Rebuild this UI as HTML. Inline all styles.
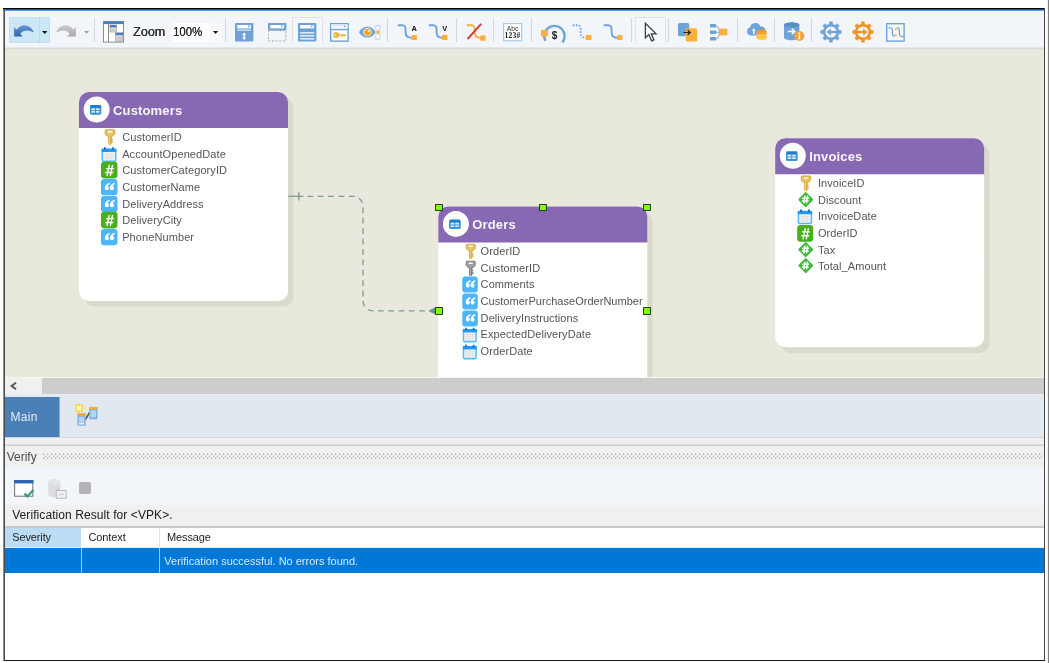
<!DOCTYPE html>
<html><head><meta charset="utf-8">
<style>
*{margin:0;padding:0;box-sizing:border-box}
html,body{width:1049px;height:663px;overflow:hidden;background:#fff}
body{position:relative;font-family:"Liberation Sans",sans-serif;font-size:11px;color:#4d4d4d}
.a{position:absolute}
svg{position:absolute;overflow:visible}
#in{position:absolute;left:5px;top:9px;width:1039px;height:651px;overflow:hidden;background:#fff}
#pg{position:absolute;left:-5px;top:-9px;width:1049px;height:663px}
#canvas{left:5px;top:49px;width:1039px;height:328px;background:#e8e8dc;overflow:hidden}
#cv{position:absolute;left:-5px;top:-49px;width:1049px;height:663px}
.sep{position:absolute;top:18px;width:1px;height:24px;background:#d3d8de}
.ent{position:absolute;background:#fff;border-radius:10px;box-shadow:5.4px 5.6px 0 0 #d9d9cc}
.ent .hd{position:absolute;left:0;top:0;right:0;height:36px;background:#8768b3;border-radius:10px 10px 0 0}
.ent .circ{position:absolute;left:5px;top:4px;width:26px;height:26px;border-radius:50%;background:#fff}
.ent .ttl{position:absolute;left:34px;top:10.7px;font-weight:bold;font-size:13px;color:#f8f5fc;line-height:16px;white-space:nowrap;letter-spacing:0.15px}
.row{position:absolute;left:0;width:100%;height:16px;line-height:16px;white-space:nowrap;font-size:11px;color:#555;letter-spacing:0.09px}
.row .t{position:absolute;left:43.2px;top:0}
.row svg{left:21.6px;top:0;width:16.5px;height:16.5px}
.hdl{position:absolute;width:7.7px;height:7.6px;background:#7fff00;border:1.1px solid #2c3620;border-radius:0.8px}
</style></head><body>
<!-- outer frame -->
<div class="a" style="left:1048px;top:0;width:1px;height:663px;background:#7e7e7e"></div><div class="a" style="left:1047px;top:0;width:1px;height:663px;background:#f1f1f1"></div>
<div id="all" style="position:absolute;left:0;top:0;width:1047px;height:663px;filter:blur(0.5px)">
<div class="a" style="left:3px;top:8px;width:1px;height:653px;background:#8e8e8e"></div><div class="a" style="left:4px;top:8px;width:1px;height:653px;background:#4c4c4c"></div>
<div class="a" style="left:3px;top:8px;width:1042px;height:1px;background:#000"></div>
<div class="a" style="left:1044px;top:8px;width:1px;height:653px;background:#4a4a4a"></div>
<div class="a" style="left:4px;top:660px;width:1041px;height:1px;background:#1c1c1c"></div>
<div id="in"><div id="pg">
<!-- top blue -->
<div class="a" style="left:5px;top:9px;width:1039px;height:1px;background:#0b58ae"></div>
<div class="a" style="left:5px;top:10px;width:1039px;height:1px;background:#5a9fe0"></div>
<div class="a" style="left:5px;top:11px;width:1039px;height:1px;background:#f5f8fc"></div>
<!-- toolbar -->
<div class="a" id="tb" style="left:5px;top:12px;width:1039px;height:37px;background:#f2f6fa"></div>
<div class="a" style="left:5px;top:47px;width:1039px;height:1px;background:#e6e9ec"></div><div class="a" style="left:5px;top:48px;width:1039px;height:1px;background:#d7dadb"></div>
<div class="a" style="left:9px;top:17px;width:41px;height:26px;background:#cce8f7;border:1px solid #c3dff0"></div>
<div class="a" style="left:39px;top:17px;width:1px;height:26px;background:#bcd9ec"></div>
<svg style="left:13px;top:22px;width:22px;height:16px" viewBox="0 0 22 16" ><defs><linearGradient id="ug" x1="0" y1="0" x2="0" y2="1"><stop offset="0" stop-color="#6b9bd6"/><stop offset="1" stop-color="#2e62ad"/></linearGradient></defs>
<path d="M1 5 L1.2 14.4 L9.8 14.4 L7.2 11.8 C10 8 15.2 7.2 20.8 10.6 C18.6 3.2 9.6 -0.2 3.5 7.6 Z" fill="url(#ug)"/></svg>
<svg style="left:42px;top:31px;width:6px;height:3px" viewBox="0 0 6 3" ><path d="M0 0h5.4l-2.7 3z" fill="#111"/></svg>
<svg style="left:55.2px;top:22px;width:22px;height:16px" viewBox="0 0 22 16" ><defs><linearGradient id="rg" x1="0" y1="0" x2="0" y2="1"><stop offset="0" stop-color="#c9cbcd"/><stop offset="1" stop-color="#a9abad"/></linearGradient></defs>
<path d="M21 5 L20.8 14.4 L12.2 14.4 L14.8 11.8 C12 8 6.8 7.2 1.2 10.6 C3.4 3.2 12.4 -0.2 18.5 7.6 Z" fill="url(#rg)"/></svg>
<svg style="left:83.5px;top:31px;width:6px;height:3px" viewBox="0 0 6 3" ><path d="M0 0h5l-2.5 2.8z" fill="#9a9a9a"/></svg>
<div class="sep" style="left:94px"></div>
<svg style="left:103px;top:21px;width:22px;height:22px" viewBox="0 0 22 22" ><rect x="0.5" y="0.5" width="20" height="20.6" fill="#fff" stroke="#8a8a8a"/>
<rect x="0.5" y="0.5" width="20" height="2.6" fill="#4a7ec2"/>
<path d="M5.5 3v18" stroke="#8a8a8a"/>
<rect x="7" y="4" width="6.5" height="7" fill="#e8e8e8" stroke="#9a9a9a" stroke-width=".6"/><rect x="7" y="4" width="6.5" height="2.4" fill="#4a7ec2"/>
<path d="M7.6 8h5.2M7.6 9.6h5.2" stroke="#aaa" stroke-width=".7"/>
<rect x="12.6" y="11.8" width="7.4" height="8.6" fill="#e4e4e4" stroke="#9a9a9a" stroke-width=".6"/><rect x="12.6" y="11.8" width="7.4" height="2.4" fill="#4a7ec2"/>
<path d="M13.4 16h6M13.4 17.6h6M13.4 19.2h6" stroke="#aaa" stroke-width=".7"/></svg>
<div class="a" style="left:133.2px;top:24.2px;font-size:13px;line-height:16px;color:#303030;white-space:nowrap;transform-origin:0 50%;transform:scaleX(0.965);text-shadow:0.35px 0 0 #303030">Zoom</div>
<div class="a" style="left:172px;top:23px;width:37.5px;height:18.6px;background:#fff"></div>
<div class="a" style="left:209.5px;top:23px;width:12px;height:18.6px;background:#f7f9fb"></div>
<div class="a" style="left:173.2px;top:24.2px;font-size:13px;line-height:16px;color:#262626;white-space:nowrap;transform-origin:0 50%;transform:scaleX(0.875);text-shadow:0.25px 0 0 #262626">100%</div>
<svg style="left:212.6px;top:31px;width:6px;height:3px" viewBox="0 0 6 3" ><path d="M0 0h5.2l-2.6 2.9z" fill="#111"/></svg>
<div class="sep" style="left:225px"></div>
<svg style="left:235.4px;top:22.7px;width:18.4px;height:18.4px" viewBox="0 0 18.4 18.4" ><rect x="0" y="0" width="18.4" height="18.4" rx="0.8" fill="#6fa3d8"/><rect x="2.2" y="2" width="13.8" height="3.4" fill="#fff"/><path d="M12.6 2.6h2.6l-1.3 2.2z" fill="#6fa3d8"/>
<rect x="2.2" y="6.4" width="13.8" height="1.3" fill="#dbe8f6"/>
<path d="M9.2 9.4l2.2 2.5h-1.5v2.6h1.5l-2.2 2.5l-2.2-2.5h1.5v-2.6h-1.5z" fill="#fff"/></svg>
<svg style="left:267.5px;top:22.7px;width:18.4px;height:18.4px" viewBox="0 0 18.4 18.4" ><rect x="0" y="0" width="18.4" height="7.4" rx="0.8" fill="#6fa3d8"/><rect x="2.2" y="2" width="13.8" height="3.4" fill="#fff"/><path d="M12.6 2.6h2.6l-1.3 2.2z" fill="#6fa3d8"/><rect x="0.5" y="7.6" width="17.4" height="10.3" fill="none" stroke="#a9a9a9" stroke-width="1" stroke-dasharray="2 1.6"/></svg>
<div class="a" style="left:291.5px;top:17px;width:31px;height:26px;background:#f4f7fb;border:1px solid #dde1e6;border-bottom:none"></div>
<svg style="left:297.8px;top:22.7px;width:18.4px;height:18.4px" viewBox="0 0 18.4 18.4" ><rect x="0" y="0" width="18.4" height="18.4" rx="0.8" fill="#6fa3d8"/><rect x="2.2" y="2" width="13.8" height="3.4" fill="#fff"/><path d="M12.6 2.6h2.6l-1.3 2.2z" fill="#6fa3d8"/>
<path d="M2.2 9.8h14M2.2 12.8h14M2.2 15.8h14" stroke="#fff" stroke-width="1.3"/></svg>
<svg style="left:329.6px;top:22.7px;width:19px;height:19px" viewBox="0 0 19 19" ><rect x="0.7" y="0.7" width="17.4" height="17.4" fill="#fff" stroke="#6fa3d8" stroke-width="1.4"/>
<rect x="1.4" y="1.4" width="16" height="4.6" fill="#f3f7fc"/><path d="M2.6 2.2h12.6" stroke="#cfe0f2" stroke-width="1"/><path d="M14 2.2h1.3v2.4h-1.3z" fill="#8fb7e2"/>
<path d="M0.7 6.6h17.4" stroke="#6fa3d8" stroke-width="1.4"/>
<circle cx="6.2" cy="12" r="3.1" fill="#e9b949"/><circle cx="5.2" cy="12" r="0.9" fill="#fbe6a6"/>
<path d="M8.6 11.2h7.6v1.6h-1.2v1h-1.4v-1h-1v1h-1.4v-1h-2.6z" fill="#e9b949"/></svg>
<svg style="left:358.8px;top:24.5px;width:22px;height:15px" viewBox="0 0 22 15" ><path d="M0 7.2C3.8 0 12.8 0 16.6 7.2C12.8 14.4 3.8 14.4 0 7.2Z" fill="#6fa3d8"/>
<ellipse cx="8.4" cy="7.2" rx="4.2" ry="4.1" fill="#fff"/><circle cx="8.5" cy="7.2" r="3.4" fill="#f9a62b"/><circle cx="9.9" cy="5.9" r="1" fill="#fff"/>
<rect x="16.9" y="0.6" width="4" height="13.6" fill="#eaf1f9" stroke="#b9d2ec" stroke-width=".8"/>
<rect x="17.7" y="1.6" width="2.4" height="2.6" fill="#fff"/><rect x="17.5" y="5.6" width="2.8" height="3.2" fill="#fbb03b"/><rect x="17.7" y="10.4" width="2.4" height="2.6" fill="#fff"/></svg>
<div class="sep" style="left:387px"></div>
<svg style="left:396.5px;top:23px;width:21px;height:18px" viewBox="0 0 21 18" ><path d="M0.8 2.2H5.5C9 2.2 8.6 6 8.6 8.5C8.6 11.5 9 14.6 13 14.6H15" fill="none" stroke="#6fa3d8" stroke-width="1.9" /><rect x="14.5" y="12" width="5.4" height="5" fill="#fbb03b"/><text x="17.2" y="8.4" font-size="7.5" font-weight="bold" text-anchor="middle" fill="#111" font-family="Liberation Sans">A</text></svg>
<svg style="left:428.4px;top:23px;width:21px;height:18px" viewBox="0 0 21 18" ><path d="M0.8 2.2H5.5C9 2.2 8.6 6 8.6 8.5C8.6 11.5 9 14.6 13 14.6H15" fill="none" stroke="#6fa3d8" stroke-width="1.9" /><rect x="14" y="12" width="5.4" height="5" fill="#fbb03b"/><text x="16.8" y="8.4" font-size="7.5" font-weight="bold" text-anchor="middle" fill="#111" font-family="Liberation Sans">V</text></svg>
<div class="sep" style="left:456px"></div>
<svg style="left:465.5px;top:23px;width:21px;height:18px" viewBox="0 0 21 18" ><path d="M0.8 2.2H5.5C9 2.2 8.6 6 8.6 8.5C8.6 11.5 9 14.6 13 14.6H15" fill="none" stroke="#fbb03b" stroke-width="1.9" /><rect x="14.2" y="12.5" width="5.4" height="5.2" fill="#fbb03b"/><path d="M15.2 0.8L1.6 16" stroke="#d13b3b" stroke-width="1.9"/></svg>
<div class="sep" style="left:493px"></div>
<svg style="left:503.2px;top:22.6px;width:19.2px;height:18.4px" viewBox="0 0 19.2 18.4" ><rect x="0.6" y="0.6" width="18" height="17.2" fill="#fff" stroke="#a9c9ea" stroke-width="1.2"/>
<text x="9.6" y="8.2" font-size="6.6" text-anchor="middle" fill="#333" font-family="Liberation Sans" letter-spacing="0.2">Abc</text>
<text x="9.6" y="15.4" font-size="7.6" font-weight="bold" text-anchor="middle" fill="#222" font-family="Liberation Serif" letter-spacing="0.2">123#</text></svg>
<div class="sep" style="left:531px"></div>
<svg style="left:540px;top:23px;width:27px;height:19.4px" viewBox="0 0 27 19.4" ><path d="M5.4 17.8A10.2 10.2 0 1 1 22.4 19.4" fill="none" stroke="#6fa3d8" stroke-width="2.4"/>
<rect x="1" y="7" width="6.8" height="6.4" fill="#fbb03b"/>
<text x="14.6" y="16.2" font-size="10" font-weight="bold" text-anchor="middle" fill="#1a1a1a" font-family="Liberation Sans">$</text></svg>
<svg style="left:571.8px;top:23px;width:21px;height:18px" viewBox="0 0 21 18" ><path d="M0.8 2.2H5.5C9 2.2 8.6 6 8.6 8.5C8.6 11.5 9 14.6 13 14.6H15" fill="none" stroke="#6fa3d8" stroke-width="1.9" stroke-dasharray="1.6 1.5"/><rect x="14" y="12" width="5.4" height="5" fill="#fbb03b"/></svg>
<svg style="left:603px;top:23px;width:21px;height:18px" viewBox="0 0 21 18" ><path d="M0.8 2.2H5.5C9 2.2 8.6 6 8.6 8.5C8.6 11.5 9 14.6 13 14.6H15" fill="none" stroke="#6fa3d8" stroke-width="1.9" /><rect x="14" y="12" width="5.4" height="5" fill="#fbb03b"/></svg>
<div class="sep" style="left:630.5px"></div>
<div class="a" style="left:635px;top:17px;width:31px;height:26px;background:#f4f7fb;border:1px solid #dde1e6;border-bottom:none"></div>
<svg style="left:644px;top:22px;width:14px;height:20px" viewBox="0 0 14 20" ><path d="M1.4 1.2V15.8L4.9 12.6L7.6 18.8L9.9 17.8L7.3 11.8H12Z" fill="#fff" stroke="#3c3c3c" stroke-width="1.3" stroke-linejoin="miter"/></svg>
<div class="sep" style="left:668px"></div>
<svg style="left:678px;top:22.8px;width:20px;height:19px" viewBox="0 0 20 19" ><rect x="0" y="0" width="11.2" height="13.2" rx="1.6" fill="#6fa3d8"/><rect x="7.8" y="5.2" width="11.4" height="13.4" rx="1.6" fill="#fbb03b"/>
<path d="M5.4 9.5h6.6M9.6 7l2.6 2.5l-2.6 2.5" fill="none" stroke="#222" stroke-width="1.2"/></svg>
<svg style="left:710px;top:23.5px;width:18px;height:17px" viewBox="0 0 18 17" ><path d="M6 1.8C9 1.8 9 8.2 11 8.2M6 8.2H11M6 14.8C9 14.8 9 8.2 11 8.2" fill="none" stroke="#8a8a8a" stroke-width="0.9"/>
<rect x="0" y="0" width="6" height="3.6" rx=".5" fill="#6fa3d8"/><rect x="0" y="6.4" width="6" height="3.6" rx=".5" fill="#6fa3d8"/><rect x="0" y="13" width="6" height="3.6" rx=".5" fill="#6fa3d8"/>
<rect x="10" y="4.6" width="7.4" height="6.8" fill="#fbb03b"/></svg>
<div class="sep" style="left:736.5px"></div>
<svg style="left:745.5px;top:22.4px;width:21px;height:19px" viewBox="0 0 21 19" ><defs><linearGradient id="og" x1="0" y1="0" x2="0" y2="1"><stop offset="0" stop-color="#f7931e"/><stop offset="0.55" stop-color="#fbb03b"/><stop offset="1" stop-color="#fde047"/></linearGradient></defs>
<path d="M4.4 13.4A4 4 0 0 1 4 5.6A5.4 5.4 0 0 1 14.4 4.6A4.4 4.4 0 0 1 16 13.4Z" fill="#6fa3d8"/>
<path d="M7.8 6.2l2 2.4h-1.3v3.6h-1.4v-3.6h-1.3z" fill="#fff"/>
<path d="M10.6 9.6c0-2.4 10-2.4 10 0v6.6c0 2.6-10 2.6-10 0z" fill="url(#og)"/>
<path d="M10.6 12.4c1 1.8 9 1.8 10 0" fill="none" stroke="#fff6d8" stroke-width=".7" opacity=".8"/></svg>
<div class="sep" style="left:774px"></div>
<svg style="left:783.6px;top:22.4px;width:22px;height:19.4px" viewBox="0 0 22 19.4" ><path d="M0 3C0 -0.6 15.4 -0.6 15.4 3V15.6C15.4 19.2 0 19.2 0 15.6Z" fill="#6fa3d8"/>
<ellipse cx="7.7" cy="3" rx="7.7" ry="2.6" fill="#5a8dc4"/>
<path d="M3.8 9.4h6.4M7.8 6.6l3 2.8l-3 2.8" fill="none" stroke="#fff" stroke-width="1.5"/>
<circle cx="15.3" cy="14" r="5" fill="#f7a233"/><rect x="14.5" y="10.6" width="1.7" height="1.7" fill="#fff"/><rect x="14.5" y="13.1" width="1.7" height="4.2" fill="#fff"/></svg>
<div class="sep" style="left:811px"></div>
<svg style="left:820px;top:21px;width:22px;height:22px" viewBox="0 0 22 22" ><path d="M9.33 3.18 L9.56 0.80 L12.44 0.80 L12.67 3.18 L15.35 4.29 L17.20 2.77 L19.23 4.80 L17.71 6.65 L18.82 9.33 L21.20 9.56 L21.20 12.44 L18.82 12.67 L17.71 15.35 L19.23 17.20 L17.20 19.23 L15.35 17.71 L12.67 18.82 L12.44 21.20 L9.56 21.20 L9.33 18.82 L6.65 17.71 L4.80 19.23 L2.77 17.20 L4.29 15.35 L3.18 12.67 L0.80 12.44 L0.80 9.56 L3.18 9.33 L4.29 6.65 L2.77 4.80 L4.80 2.77 L6.65 4.29Z" fill="#6fa3d8" stroke="#6fa3d8" stroke-width="0.5" stroke-linejoin="round"/><circle cx="11" cy="11" r="5.6" fill="#f2f6fa"/><path d="M19 11H10" stroke="#6fa3d8" stroke-width="2.2"/><path d="M6.6 11l4.2 -3.6v7.2z" fill="#6fa3d8"/></svg>
<svg style="left:852.4px;top:21px;width:22px;height:22px" viewBox="0 0 22 22" ><path d="M9.33 3.18 L9.56 0.80 L12.44 0.80 L12.67 3.18 L15.35 4.29 L17.20 2.77 L19.23 4.80 L17.71 6.65 L18.82 9.33 L21.20 9.56 L21.20 12.44 L18.82 12.67 L17.71 15.35 L19.23 17.20 L17.20 19.23 L15.35 17.71 L12.67 18.82 L12.44 21.20 L9.56 21.20 L9.33 18.82 L6.65 17.71 L4.80 19.23 L2.77 17.20 L4.29 15.35 L3.18 12.67 L0.80 12.44 L0.80 9.56 L3.18 9.33 L4.29 6.65 L2.77 4.80 L4.80 2.77 L6.65 4.29Z" fill="#f7931e" stroke="#f7931e" stroke-width="0.5" stroke-linejoin="round"/><circle cx="11" cy="11" r="5.6" fill="#f2f6fa"/><path d="M3 11H12" stroke="#f7931e" stroke-width="2.2"/><path d="M15.4 11l-4.2 -3.6v7.2z" fill="#f7931e"/></svg>
<svg style="left:886.2px;top:22.8px;width:19px;height:19px" viewBox="0 0 19 19" ><rect x="0.7" y="0.7" width="17.4" height="17.4" fill="#f6f9fc" stroke="#6fa3d8" stroke-width="1.4"/>
<path d="M2.6 4.9H4.4C6.6 4.9 6.4 7.2 6.4 9S6.2 13.3 8.6 13.3" fill="none" stroke="#6fa3d8" stroke-width="1.3"/>
<path d="M10.6 4.9H11.4C13.6 4.9 13.4 7.2 13.4 9S13.2 13.5 15.6 13.5H17.4" fill="none" stroke="#6fa3d8" stroke-width="1.3"/>
<rect x="8.7" y="5.3" width="1.9" height="1.9" fill="#fbb03b"/><rect x="8.7" y="11.2" width="1.9" height="1.9" fill="#fbb03b"/></svg>
<!-- canvas -->
<div class="a" id="canvas"><div id="cv">
<div class="ent" style="left:79px;top:92px;width:209px;height:209px;"><div class="hd"></div><svg style="left:0;top:0;width:36px;height:36px" viewBox="0 0 36 36"><circle cx="17.6" cy="17.5" r="13" fill="#fff"/></svg><svg style="left:11.2px;top:12.9px;width:11px;height:9px" viewBox="0 0 11 9"><rect x="0" y="0" width="11.2" height="9.4" rx="1.3" fill="#227fc3"/><path d="M0 2.8H11.2V8.1a1.3 1.3 0 0 1-1.3 1.3H1.3a1.3 1.3 0 0 1-1.3-1.3z" fill="#3b93d6"/>
<rect x="1.4" y="3.4" width="3.6" height="1.7" fill="#dcecf8"/><rect x="6" y="3.4" width="3.6" height="1.7" fill="#dcecf8"/>
<rect x="1.4" y="6" width="3.6" height="1.7" fill="#dcecf8"/><rect x="6" y="6" width="3.6" height="1.7" fill="#dcecf8"/></svg><div class="ttl">Customers</div><div class="row" style="top:37.30px"><svg style="left:22.2px;width:16.5px" viewBox="0 0 16.5 16.5" preserveAspectRatio="none"><path d="M5.2 0.3H12.8a1.5 1.5 0 0 1 1.5 1.5V5L10.75 8.2V9.6h1.1v1.3h-1.1v1h1.3v1.4h-1.3v1.4L9 16.2L7.2 14.7V8.2L3.7 5V1.8a1.5 1.5 0 0 1 1.5-1.5z" fill="#d5aa45"/>
<path d="M5.5 1.2H12.5a.8 .8 0 0 1 .8 .8V4.6L10.2 7.4H7.8L4.7 4.6V2a.8 .8 0 0 1 .8-.8z" fill="#f3d67e" opacity=".6"/>
<path d="M8.1 7.6v7.4l.9.8v-8.2z" fill="#f6e19a" opacity=".85"/>
<rect x="6.8" y="2.1" width="4.4" height="1.4" rx=".7" fill="#fff"/></svg><span class="t" style="left:43.2px">CustomerID</span></div><div class="row" style="top:53.85px"><svg style="left:22.2px;width:16.5px" viewBox="0 0 16.5 16.5" preserveAspectRatio="none"><rect x="1.3" y="3.3" width="13.4" height="11.9" rx="1" fill="#f4f4f4" stroke="#54b9fc" stroke-width="1.6"/>
<rect x="0.5" y="2.7" width="15" height="3.3" rx=".8" fill="#2299f2"/>
<rect x="3" y="1.3" width="1.9" height="2.6" fill="#1272c4"/><rect x="11.1" y="1.3" width="1.9" height="2.6" fill="#1272c4"/>
<path d="M3 8.2h10.2M3 10.3h10.2M3 12.4h10.2M5.5 6.6v7.6M8.1 6.6v7.6M10.7 6.6v7.6" stroke="#dcdcdc" stroke-width=".7"/></svg><span class="t" style="left:43.2px">AccountOpenedDate</span></div><div class="row" style="top:70.40px"><svg style="left:22.2px;width:16.5px" viewBox="0 0 16.5 16.5" preserveAspectRatio="none"><rect x="0" y="-0.3" width="16.5" height="16.7" rx="3.3" fill="#49af1c"/>
<path d="M8.3 2.9L6 14M11.6 2.9L9.3 14M4.9 6.6H13.1M4.2 10.5H12.4" stroke="#fff" stroke-width="1.4"/></svg><span class="t" style="left:43.2px">CustomerCategoryID</span></div><div class="row" style="top:86.95px"><svg style="left:22.2px;width:16.5px" viewBox="0 0 16.5 16.5" preserveAspectRatio="none"><rect x="0" y="0" width="16.5" height="16.2" rx="3" fill="#4db6fb"/>
<path d="M8.4 3.7C5.2 4.7 3.7 6.8 3.7 9A2.15 2.15 0 1 0 6.4 7C6.8 6.2 7.6 5.7 8.9 5.3Z" fill="#fff"/><path transform="translate(5.1,0)" d="M8.4 3.7C5.2 4.7 3.7 6.8 3.7 9A2.15 2.15 0 1 0 6.4 7C6.8 6.2 7.6 5.7 8.9 5.3Z" fill="#fff"/></svg><span class="t" style="left:43.2px">CustomerName</span></div><div class="row" style="top:103.50px"><svg style="left:22.2px;width:16.5px" viewBox="0 0 16.5 16.5" preserveAspectRatio="none"><rect x="0" y="0" width="16.5" height="16.2" rx="3" fill="#4db6fb"/>
<path d="M8.4 3.7C5.2 4.7 3.7 6.8 3.7 9A2.15 2.15 0 1 0 6.4 7C6.8 6.2 7.6 5.7 8.9 5.3Z" fill="#fff"/><path transform="translate(5.1,0)" d="M8.4 3.7C5.2 4.7 3.7 6.8 3.7 9A2.15 2.15 0 1 0 6.4 7C6.8 6.2 7.6 5.7 8.9 5.3Z" fill="#fff"/></svg><span class="t" style="left:43.2px">DeliveryAddress</span></div><div class="row" style="top:120.05px"><svg style="left:22.2px;width:16.5px" viewBox="0 0 16.5 16.5" preserveAspectRatio="none"><rect x="0" y="-0.3" width="16.5" height="16.7" rx="3.3" fill="#49af1c"/>
<path d="M8.3 2.9L6 14M11.6 2.9L9.3 14M4.9 6.6H13.1M4.2 10.5H12.4" stroke="#fff" stroke-width="1.4"/></svg><span class="t" style="left:43.2px">DeliveryCity</span></div><div class="row" style="top:136.60px"><svg style="left:22.2px;width:16.5px" viewBox="0 0 16.5 16.5" preserveAspectRatio="none"><rect x="0" y="0" width="16.5" height="16.2" rx="3" fill="#4db6fb"/>
<path d="M8.4 3.7C5.2 4.7 3.7 6.8 3.7 9A2.15 2.15 0 1 0 6.4 7C6.8 6.2 7.6 5.7 8.9 5.3Z" fill="#fff"/><path transform="translate(5.1,0)" d="M8.4 3.7C5.2 4.7 3.7 6.8 3.7 9A2.15 2.15 0 1 0 6.4 7C6.8 6.2 7.6 5.7 8.9 5.3Z" fill="#fff"/></svg><span class="t" style="left:43.2px">PhoneNumber</span></div></div>
<div class="ent" style="left:438px;top:207px;width:209px;height:200px;transform:translate(0.3px,-0.6px) rotate(0.002deg)"><div class="hd"></div><svg style="left:0;top:0;width:36px;height:36px" viewBox="0 0 36 36"><circle cx="17.6" cy="17.5" r="13" fill="#fff"/></svg><svg style="left:11.2px;top:12.9px;width:11px;height:9px" viewBox="0 0 11 9"><rect x="0" y="0" width="11.2" height="9.4" rx="1.3" fill="#227fc3"/><path d="M0 2.8H11.2V8.1a1.3 1.3 0 0 1-1.3 1.3H1.3a1.3 1.3 0 0 1-1.3-1.3z" fill="#3b93d6"/>
<rect x="1.4" y="3.4" width="3.6" height="1.7" fill="#dcecf8"/><rect x="6" y="3.4" width="3.6" height="1.7" fill="#dcecf8"/>
<rect x="1.4" y="6" width="3.6" height="1.7" fill="#dcecf8"/><rect x="6" y="6" width="3.6" height="1.7" fill="#dcecf8"/></svg><div class="ttl">Orders</div><div class="row" style="top:37.30px"><svg style="left:23.8px;width:15.5px" viewBox="0 0 16.5 16.5" preserveAspectRatio="none"><path d="M5.2 0.3H12.8a1.5 1.5 0 0 1 1.5 1.5V5L10.75 8.2V9.6h1.1v1.3h-1.1v1h1.3v1.4h-1.3v1.4L9 16.2L7.2 14.7V8.2L3.7 5V1.8a1.5 1.5 0 0 1 1.5-1.5z" fill="#d5aa45"/>
<path d="M5.5 1.2H12.5a.8 .8 0 0 1 .8 .8V4.6L10.2 7.4H7.8L4.7 4.6V2a.8 .8 0 0 1 .8-.8z" fill="#f3d67e" opacity=".6"/>
<path d="M8.1 7.6v7.4l.9.8v-8.2z" fill="#f6e19a" opacity=".85"/>
<rect x="6.8" y="2.1" width="4.4" height="1.4" rx=".7" fill="#fff"/></svg><span class="t" style="left:42.3px">OrderID</span></div><div class="row" style="top:53.85px"><svg style="left:23.8px;width:15.5px" viewBox="0 0 16.5 16.5" preserveAspectRatio="none"><path d="M5.2 0.3H12.8a1.5 1.5 0 0 1 1.5 1.5V5L10.75 8.2V9.6h1.1v1.3h-1.1v1h1.3v1.4h-1.3v1.4L9 16.2L7.2 14.7V8.2L3.7 5V1.8a1.5 1.5 0 0 1 1.5-1.5z" fill="#7d7d7d"/>
<path d="M5.5 1.2H12.5a.8 .8 0 0 1 .8 .8V4.6L10.2 7.4H7.8L4.7 4.6V2a.8 .8 0 0 1 .8-.8z" fill="#b9b9b9" opacity=".6"/>
<path d="M8.1 7.6v7.4l.9.8v-8.2z" fill="#c9c9c9" opacity=".85"/>
<rect x="6.8" y="2.1" width="4.4" height="1.4" rx=".7" fill="#fff"/></svg><span class="t" style="left:42.3px">CustomerID</span></div><div class="row" style="top:70.40px"><svg style="left:23.8px;width:15.5px" viewBox="0 0 16.5 16.5" preserveAspectRatio="none"><rect x="0" y="0" width="16.5" height="16.2" rx="3" fill="#4db6fb"/>
<path d="M8.4 3.7C5.2 4.7 3.7 6.8 3.7 9A2.15 2.15 0 1 0 6.4 7C6.8 6.2 7.6 5.7 8.9 5.3Z" fill="#fff"/><path transform="translate(5.1,0)" d="M8.4 3.7C5.2 4.7 3.7 6.8 3.7 9A2.15 2.15 0 1 0 6.4 7C6.8 6.2 7.6 5.7 8.9 5.3Z" fill="#fff"/></svg><span class="t" style="left:42.3px">Comments</span></div><div class="row" style="top:86.95px"><svg style="left:23.8px;width:15.5px" viewBox="0 0 16.5 16.5" preserveAspectRatio="none"><rect x="0" y="0" width="16.5" height="16.2" rx="3" fill="#4db6fb"/>
<path d="M8.4 3.7C5.2 4.7 3.7 6.8 3.7 9A2.15 2.15 0 1 0 6.4 7C6.8 6.2 7.6 5.7 8.9 5.3Z" fill="#fff"/><path transform="translate(5.1,0)" d="M8.4 3.7C5.2 4.7 3.7 6.8 3.7 9A2.15 2.15 0 1 0 6.4 7C6.8 6.2 7.6 5.7 8.9 5.3Z" fill="#fff"/></svg><span class="t" style="left:42.3px;letter-spacing:0.025px">CustomerPurchaseOrderNumber</span></div><div class="row" style="top:103.50px"><svg style="left:23.8px;width:15.5px" viewBox="0 0 16.5 16.5" preserveAspectRatio="none"><rect x="0" y="0" width="16.5" height="16.2" rx="3" fill="#4db6fb"/>
<path d="M8.4 3.7C5.2 4.7 3.7 6.8 3.7 9A2.15 2.15 0 1 0 6.4 7C6.8 6.2 7.6 5.7 8.9 5.3Z" fill="#fff"/><path transform="translate(5.1,0)" d="M8.4 3.7C5.2 4.7 3.7 6.8 3.7 9A2.15 2.15 0 1 0 6.4 7C6.8 6.2 7.6 5.7 8.9 5.3Z" fill="#fff"/></svg><span class="t" style="left:42.3px">DeliveryInstructions</span></div><div class="row" style="top:120.05px"><svg style="left:23.8px;width:15.5px" viewBox="0 0 16.5 16.5" preserveAspectRatio="none"><rect x="1.3" y="3.3" width="13.4" height="11.9" rx="1" fill="#f4f4f4" stroke="#54b9fc" stroke-width="1.6"/>
<rect x="0.5" y="2.7" width="15" height="3.3" rx=".8" fill="#2299f2"/>
<rect x="3" y="1.3" width="1.9" height="2.6" fill="#1272c4"/><rect x="11.1" y="1.3" width="1.9" height="2.6" fill="#1272c4"/>
<path d="M3 8.2h10.2M3 10.3h10.2M3 12.4h10.2M5.5 6.6v7.6M8.1 6.6v7.6M10.7 6.6v7.6" stroke="#dcdcdc" stroke-width=".7"/></svg><span class="t" style="left:42.3px">ExpectedDeliveryDate</span></div><div class="row" style="top:136.60px"><svg style="left:23.8px;width:15.5px" viewBox="0 0 16.5 16.5" preserveAspectRatio="none"><rect x="1.3" y="3.3" width="13.4" height="11.9" rx="1" fill="#f4f4f4" stroke="#54b9fc" stroke-width="1.6"/>
<rect x="0.5" y="2.7" width="15" height="3.3" rx=".8" fill="#2299f2"/>
<rect x="3" y="1.3" width="1.9" height="2.6" fill="#1272c4"/><rect x="11.1" y="1.3" width="1.9" height="2.6" fill="#1272c4"/>
<path d="M3 8.2h10.2M3 10.3h10.2M3 12.4h10.2M5.5 6.6v7.6M8.1 6.6v7.6M10.7 6.6v7.6" stroke="#dcdcdc" stroke-width=".7"/></svg><span class="t" style="left:42.3px">OrderDate</span></div></div>
<div class="ent" style="left:775px;top:139px;width:209px;height:208.5px;transform:translate(0.2px,-0.7px) rotate(0.002deg)"><div class="hd"></div><svg style="left:0;top:0;width:36px;height:36px" viewBox="0 0 36 36"><circle cx="17.6" cy="17.5" r="13" fill="#fff"/></svg><svg style="left:11.2px;top:12.9px;width:11px;height:9px" viewBox="0 0 11 9"><rect x="0" y="0" width="11.2" height="9.4" rx="1.3" fill="#227fc3"/><path d="M0 2.8H11.2V8.1a1.3 1.3 0 0 1-1.3 1.3H1.3a1.3 1.3 0 0 1-1.3-1.3z" fill="#3b93d6"/>
<rect x="1.4" y="3.4" width="3.6" height="1.7" fill="#dcecf8"/><rect x="6" y="3.4" width="3.6" height="1.7" fill="#dcecf8"/>
<rect x="1.4" y="6" width="3.6" height="1.7" fill="#dcecf8"/><rect x="6" y="6" width="3.6" height="1.7" fill="#dcecf8"/></svg><div class="ttl">Invoices</div><div class="row" style="top:37.30px"><svg style="left:22.4px;width:16px" viewBox="0 0 16.5 16.5" preserveAspectRatio="none"><path d="M5.2 0.3H12.8a1.5 1.5 0 0 1 1.5 1.5V5L10.75 8.2V9.6h1.1v1.3h-1.1v1h1.3v1.4h-1.3v1.4L9 16.2L7.2 14.7V8.2L3.7 5V1.8a1.5 1.5 0 0 1 1.5-1.5z" fill="#d5aa45"/>
<path d="M5.5 1.2H12.5a.8 .8 0 0 1 .8 .8V4.6L10.2 7.4H7.8L4.7 4.6V2a.8 .8 0 0 1 .8-.8z" fill="#f3d67e" opacity=".6"/>
<path d="M8.1 7.6v7.4l.9.8v-8.2z" fill="#f6e19a" opacity=".85"/>
<rect x="6.8" y="2.1" width="4.4" height="1.4" rx=".7" fill="#fff"/></svg><span class="t" style="left:42.7px">InvoiceID</span></div><div class="row" style="top:53.85px"><svg style="left:22.4px;width:16px" viewBox="0 0 16.5 16.5" preserveAspectRatio="none"><path d="M8.8 0.9L15.2 7.3L8.8 13.7L2.4 7.3Z" fill="#3fb93f" stroke="#3fb93f" stroke-width="2.2" stroke-linejoin="round"/>
<path d="M8 3.4L6.8 11.1M10.7 3.4L9.5 11.1M5.2 5.9H12.2M4.8 8.7H11.8" stroke="#fff" stroke-width="1.55"/></svg><span class="t" style="left:42.7px">Discount</span></div><div class="row" style="top:70.40px"><svg style="left:22.4px;width:16px" viewBox="0 0 16.5 16.5" preserveAspectRatio="none"><rect x="1.3" y="3.3" width="13.4" height="11.9" rx="1" fill="#f4f4f4" stroke="#54b9fc" stroke-width="1.6"/>
<rect x="0.5" y="2.7" width="15" height="3.3" rx=".8" fill="#2299f2"/>
<rect x="3" y="1.3" width="1.9" height="2.6" fill="#1272c4"/><rect x="11.1" y="1.3" width="1.9" height="2.6" fill="#1272c4"/>
<path d="M3 8.2h10.2M3 10.3h10.2M3 12.4h10.2M5.5 6.6v7.6M8.1 6.6v7.6M10.7 6.6v7.6" stroke="#dcdcdc" stroke-width=".7"/></svg><span class="t" style="left:42.7px">InvoiceDate</span></div><div class="row" style="top:86.95px"><svg style="left:22.4px;width:16px" viewBox="0 0 16.5 16.5" preserveAspectRatio="none"><rect x="0" y="-0.3" width="16.5" height="16.7" rx="3.3" fill="#49af1c"/>
<path d="M8.3 2.9L6 14M11.6 2.9L9.3 14M4.9 6.6H13.1M4.2 10.5H12.4" stroke="#fff" stroke-width="1.4"/></svg><span class="t" style="left:42.7px">OrderID</span></div><div class="row" style="top:103.50px"><svg style="left:22.4px;width:16px" viewBox="0 0 16.5 16.5" preserveAspectRatio="none"><path d="M8.8 0.9L15.2 7.3L8.8 13.7L2.4 7.3Z" fill="#3fb93f" stroke="#3fb93f" stroke-width="2.2" stroke-linejoin="round"/>
<path d="M8 3.4L6.8 11.1M10.7 3.4L9.5 11.1M5.2 5.9H12.2M4.8 8.7H11.8" stroke="#fff" stroke-width="1.55"/></svg><span class="t" style="left:42.7px">Tax</span></div><div class="row" style="top:120.05px"><svg style="left:22.4px;width:16px" viewBox="0 0 16.5 16.5" preserveAspectRatio="none"><path d="M8.8 0.9L15.2 7.3L8.8 13.7L2.4 7.3Z" fill="#3fb93f" stroke="#3fb93f" stroke-width="2.2" stroke-linejoin="round"/>
<path d="M8 3.4L6.8 11.1M10.7 3.4L9.5 11.1M5.2 5.9H12.2M4.8 8.7H11.8" stroke="#fff" stroke-width="1.55"/></svg><span class="t" style="left:42.7px">Total_Amount</span></div></div>
<svg style="left:0px;top:0px;width:1049px;height:663px" viewBox="0 0 1049 663" ><path d="M288.5 196.3H303.4" fill="none" stroke="#7c9c96" stroke-width="1.3"/><path d="M298.8 192.2V200.6" stroke="#7c9c96" stroke-width="1.3"/>
<path d="M307.3 196.3H353A10 10 0 0 1 363 206.3V296.4" fill="none" stroke="#7c9c96" stroke-width="1.3" stroke-dasharray="5.8 4.6"/>
<path d="M424.9 310.9H373A10 10 0 0 1 363 300.9V300" fill="none" stroke="#7c9c96" stroke-width="1.3" stroke-dasharray="5.7 4.6"/>
<path d="M428.4 310.9L435.4 307.3V314.5Z" fill="#6a8e8c"/></svg>
<div class="hdl" style="left:434.9px;top:203.6px"></div>
<div class="hdl" style="left:539.3px;top:203.6px"></div>
<div class="hdl" style="left:643.1px;top:203.6px"></div>
<div class="hdl" style="left:434.9px;top:307.3px"></div>
<div class="hdl" style="left:643.1px;top:307.3px"></div>
</div></div>
<div class="a" style="left:5px;top:377px;width:1039px;height:18px;background:#f0f0f0"></div>
<div class="a" style="left:5px;top:377px;width:1039px;height:1px;background:#f7f7f2"></div>
<div class="a" style="left:42px;top:378px;width:1002px;height:16px;background:#cdcdcd"></div>
<svg style="left:9.5px;top:382px;width:7px;height:8px" viewBox="0 0 7 8" ><path d="M6 0.8L1.6 4L6 7.2" fill="none" stroke="#575757" stroke-width="2"/></svg>
<div class="a" style="left:5px;top:394px;width:1039px;height:44px;background:#e1e8f0"></div>
<div class="a" style="left:5px;top:394px;width:1039px;height:1px;background:#e9edf1"></div>
<div class="a" style="left:5px;top:396.5px;width:54px;height:41px;background:#4a7fb8"></div>
<div class="a" style="left:59px;top:396.5px;width:1px;height:41px;background:#90b0d3"></div>
<div class="a" style="left:10.5px;top:408.8px;font-size:12px;line-height:16px;color:#e4edf7;letter-spacing:0.3px">Main</div>
<svg style="left:75px;top:404px;width:23px;height:23px" viewBox="0 0 23 23" ><g fill="#fbd34a"><rect x="0.4" y="0.4" width="7.4" height="7.4" fill="#fde88a"/><rect x="2.4" y="2.2" width="3.6" height="3.6" fill="#fff8d0"/>
<path d="M0.4 0.4h1.6v1.6h-1.6zM6.2 0.4h1.6v1.6h-1.6zM0.4 6.2h1.6v1.6h-1.6zM6.2 6.2h1.6v1.6h-1.6zM3.3 0h1.6v1.4h-1.6zM3.3 6.8h1.6v1.4h-1.6zM0 3.3h1.4v1.6h-1.4zM6.8 3.3h1.4v1.6h-1.4z" fill="#f9c623"/></g>
<path d="M10.4 15.6L14.6 8.4" stroke="#555" stroke-width="1.6"/>
<rect x="2.4" y="9.4" width="8.2" height="12.4" rx=".6" fill="#7fb0e2"/><rect x="2.4" y="9.4" width="8.2" height="2.2" fill="#f9a93a"/><rect x="3.8" y="12.8" width="5.4" height="6" fill="#b9d4f0"/><rect x="3.8" y="19.2" width="5.4" height="1.2" fill="#fff"/>
<rect x="14.2" y="3" width="8.2" height="12.2" rx=".6" fill="#7fb0e2"/><rect x="14.2" y="3" width="8.2" height="2.2" fill="#f9a93a"/><rect x="15.6" y="6.4" width="5.4" height="7" fill="#b9d4f0"/></svg>
<div class="a" style="left:5px;top:437px;width:1039px;height:1px;background:#cfd5db"></div>
<div class="a" style="left:5px;top:438px;width:1039px;height:30px;background:#f0f0f0"></div>
<div class="a" style="left:5px;top:444px;width:1039px;height:1px;background:#dcdcdc"></div><div class="a" style="left:5px;top:445px;width:1039px;height:1px;background:#cecece"></div>
<div class="a" style="left:6.7px;top:448.5px;font-size:12px;line-height:16px;color:#4a4a52">Verify</div>
<svg style="left:42px;top:453px;width:1001px;height:7px"><defs><pattern id="dp" x="0" y="0" width="4" height="4" patternUnits="userSpaceOnUse"><rect x="1" y="0.6" width="1.3" height="1.3" fill="#a9a9a9"/><rect x="3" y="2.6" width="1.3" height="1.3" fill="#a9a9a9"/><rect x="3" y="0.6" width="1.2" height="1.2" fill="#fafafa"/><rect x="1" y="2.6" width="1.2" height="1.2" fill="#fafafa"/></pattern></defs><rect x="0" y="0" width="1001" height="6.4" fill="url(#dp)"/></svg>
<div class="a" style="left:5px;top:467px;width:1039px;height:38px;background:#f2f6fa"></div>
<svg style="left:14px;top:480px;width:21px;height:18px" viewBox="0 0 21 18" ><rect x="0.6" y="0.6" width="18.2" height="15.6" fill="#fff" stroke="#7c7c7c" stroke-width="1.1"/><rect x="0" y="0" width="19.4" height="3.4" fill="#2f63b3"/>
<path d="M10.4 13.6L13.4 16.4L19.4 10" fill="none" stroke="#3f9a72" stroke-width="2.2"/></svg>
<svg style="left:47.6px;top:478.8px;width:19px;height:20px" viewBox="0 0 19 20" ><path d="M0.3 3C0.3 -0.6 12.2 -0.6 12.2 3V15.4C12.2 19 0.3 19 0.3 15.4Z" fill="#dcdddf"/><ellipse cx="6.25" cy="3" rx="5.9" ry="2.4" fill="#e6e7e9"/>
<path d="M8.4 11l2-2l2 2" fill="#d0d0d0"/><rect x="8.2" y="11.6" width="10" height="7.6" fill="#f3f4f6" stroke="#b5b5b5" stroke-width="1"/><path d="M10.2 15.4h6" stroke="#d6d6d6" stroke-width="1.6"/></svg>
<div class="a" style="left:79px;top:482.3px;width:12px;height:12px;border-radius:1.6px;background:#b3b4b5"></div>
<div class="a" style="left:5px;top:505px;width:1039px;height:22px;background:#f0f0f0"></div>
<div class="a" style="left:12.2px;top:506.7px;font-size:12px;line-height:16px;color:#202020;letter-spacing:0.08px;white-space:nowrap">Verification Result for &lt;VPK&gt;.</div>
<div class="a" style="left:5px;top:526px;width:1039px;height:1.5px;background:#c9c9c9"></div>
<div class="a" style="left:5px;top:527.5px;width:1039px;height:20px;background:#fff"></div>
<div class="a" style="left:5px;top:527.5px;width:76px;height:19.5px;background:#bcdcf4"></div>
<div class="a" style="left:81px;top:527.5px;width:1px;height:20px;background:#fff"></div>
<div class="a" style="left:159px;top:527.5px;width:1px;height:20px;background:#e3e3e3"></div>
<div class="a" style="left:5px;top:547px;width:1039px;height:1px;background:#ededed"></div>
<div class="a" style="left:12.2px;top:528.6px;font-size:11px;line-height:16px;color:#1e1e1e;letter-spacing:-0.12px">Severity</div>
<div class="a" style="left:88.5px;top:528.6px;font-size:11px;line-height:16px;color:#1e1e1e;letter-spacing:-0.12px">Context</div>
<div class="a" style="left:167px;top:528.6px;font-size:11px;line-height:16px;color:#1e1e1e;letter-spacing:-0.12px">Message</div>
<div class="a" style="left:5px;top:548.3px;width:1039px;height:24.3px;background:#0078d7"></div>
<div class="a" style="left:81px;top:548.3px;width:1px;height:24.3px;background:#9cc9ef"></div>
<div class="a" style="left:159px;top:548.3px;width:1px;height:24.3px;background:#9cc9ef"></div>
<div class="a" style="left:164.3px;top:553.3px;font-size:11px;line-height:16px;color:#d6e9f9;white-space:nowrap">Verification successful. No errors found.</div>
</div></div>
</div>
</body></html>
